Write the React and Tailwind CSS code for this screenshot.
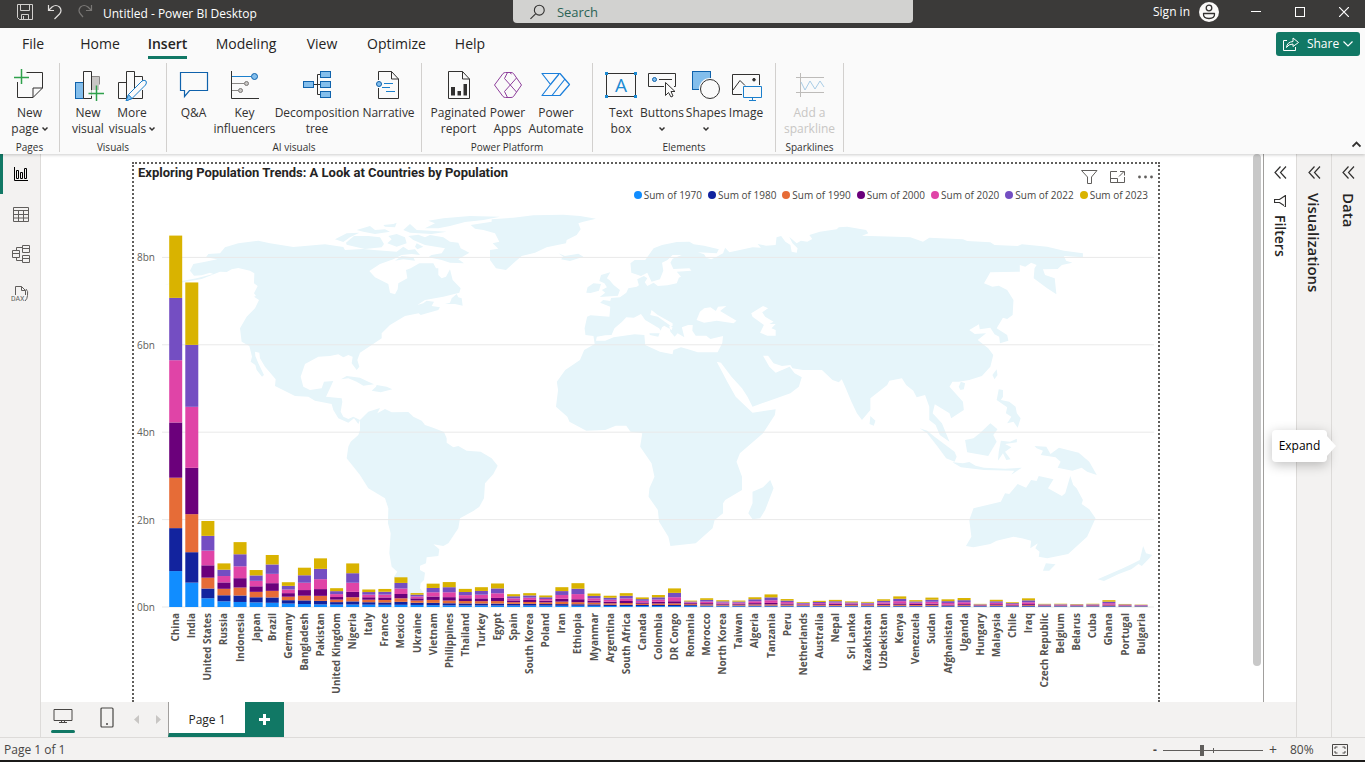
import React from "react";

const SERIES = [
  ["Sum of 1970", "#118DFF"],
  ["Sum of 1980", "#12239E"],
  ["Sum of 1990", "#E66C37"],
  ["Sum of 2000", "#6B007B"],
  ["Sum of 2020", "#E044A7"],
  ["Sum of 2022", "#744EC2"],
  ["Sum of 2023", "#D9B300"],
];

// Population in millions for each year of SERIES.
const DATA = [
  ["China", 822.5, 982.4, 1153.7, 1264.1, 1424.9, 1425.9, 1425.7],
  ["India", 557.5, 696.8, 870.5, 1059.6, 1396.4, 1417.2, 1428.6],
  ["United States", 200.3, 223.1, 248.1, 282.4, 335.9, 338.3, 340],
  ["Russia", 130.1, 138.3, 148, 146.8, 145.6, 144.7, 144.4],
  ["Indonesia", 115.2, 148.2, 182.2, 214.1, 271.9, 275.5, 277.5],
  ["Japan", 105.4, 117.6, 123.7, 126.8, 125.2, 124, 123.3],
  ["Brazil", 96.4, 122.3, 150.7, 175.9, 213.2, 215.3, 216.4],
  ["Germany", 78.3, 77.8, 79.4, 81.6, 83.3, 83.4, 83.3],
  ["Bangladesh", 67.5, 83.9, 107.1, 129.2, 167.4, 171.2, 173],
  ["Pakistan", 59.3, 80.6, 115.4, 154.4, 227.2, 235.8, 240.5],
  ["United Kingdom", 55.7, 56.3, 57.2, 58.9, 67.1, 67.5, 67.7],
  ["Nigeria", 55.6, 73, 95.2, 122.9, 208.3, 218.5, 223.8],
  ["Italy", 53.3, 56.3, 56.8, 57, 59.5, 59, 58.9],
  ["France", 50.5, 53.7, 56.4, 58.7, 64.5, 64.6, 64.8],
  ["Mexico", 50.3, 67.7, 81.7, 97.9, 126, 127.5, 128.5],
  ["Ukraine", 47.3, 49.9, 51.6, 48.9, 43.9, 39.7, 36.7],
  ["Vietnam", 41.9, 52.9, 66.9, 79, 96.6, 98.2, 98.9],
  ["Philippines", 37.4, 48.4, 61.6, 78, 112.2, 115.6, 117.3],
  ["Thailand", 35.8, 45.7, 55.2, 63.1, 71.5, 71.7, 71.8],
  ["Turkey", 35.5, 44.1, 54.3, 64.1, 84.1, 85.3, 85.8],
  ["Egypt", 34.8, 43.7, 57.2, 71.4, 107.5, 111, 112.7],
  ["Spain", 33.8, 37.5, 38.9, 40.7, 47.4, 47.6, 47.5],
  ["South Korea", 32.6, 38.2, 44.1, 46.8, 51.8, 51.8, 51.8],
  ["Poland", 32.5, 35.5, 38.1, 38.5, 38.4, 39.9, 41],
  ["Iran", 28.4, 38.5, 55.8, 65.5, 87.3, 88.6, 89.2],
  ["Ethiopia", 28.3, 34.9, 47.9, 67, 117.2, 123.4, 126.5],
  ["Myanmar", 27.3, 33.5, 40.1, 45.5, 53.4, 54.2, 54.6],
  ["Argentina", 23.8, 28, 32.6, 37, 45, 45.5, 45.8],
  ["South Africa", 22.4, 28.6, 39.9, 46.8, 58.8, 59.9, 60.4],
  ["Canada", 21.4, 24.5, 27.7, 30.7, 37.9, 38.5, 38.8],
  ["Colombia", 20.9, 26.2, 32.6, 39.2, 50.9, 51.9, 52.1],
  ["DR Congo", 20.2, 26.7, 35.9, 48.6, 92.9, 99, 102.3],
  ["Romania", 20.3, 22.6, 22.8, 21.9, 19.4, 19.7, 19.9],
  ["Morocco", 15.3, 19.7, 24.6, 28.6, 36.7, 37.5, 37.8],
  ["North Korea", 14.9, 17.6, 20.8, 23.4, 25.9, 26.1, 26.2],
  ["Taiwan", 14.9, 17.8, 20.6, 22.2, 23.8, 23.9, 23.9],
  ["Algeria", 13.8, 18.7, 25.5, 30.8, 43.5, 44.9, 45.6],
  ["Tanzania", 13.6, 19.3, 26.2, 34.5, 61.7, 65.5, 67.4],
  ["Peru", 13.6, 17.5, 22.1, 26.7, 33.3, 34, 34.4],
  ["Netherlands", 13, 14.1, 14.9, 15.9, 17.4, 17.6, 17.6],
  ["Australia", 12.6, 14.7, 17, 19, 25.7, 26.2, 26.4],
  ["Nepal", 12.5, 15.6, 19.6, 24.6, 29.3, 30.5, 30.9],
  ["Sri Lanka", 12.4, 14.9, 17.2, 18.8, 21.7, 21.8, 21.9],
  ["Kazakhstan", 12.3, 14.2, 16.9, 15.2, 19, 19.4, 19.6],
  ["Uzbekistan", 12, 15.9, 20.6, 24.9, 33.5, 34.6, 35.2],
  ["Kenya", 11.5, 16.2, 23.2, 30.9, 52, 54, 55.1],
  ["Venezuela", 11.4, 15.2, 19.8, 24.4, 28.5, 28.3, 28.8],
  ["Sudan", 11.3, 16.7, 21.1, 26.3, 44.4, 46.9, 48.1],
  ["Afghanistan", 10.8, 12.5, 10.7, 19.5, 39, 41.1, 42.2],
  ["Uganda", 10.3, 13.3, 17.6, 24, 44.4, 47.2, 48.6],
  ["Hungary", 10.3, 10.7, 10.4, 10.2, 9.8, 10, 10.2],
  ["Malaysia", 10.3, 13.2, 17.5, 22.9, 33.2, 33.9, 34.3],
  ["Chile", 9.8, 11.5, 13.3, 15.4, 19.3, 19.6, 19.6],
  ["Iraq", 9.8, 13.7, 17.7, 24.6, 42.6, 44.5, 45.5],
  ["Czech Republic", 9.8, 10.3, 10.3, 10.2, 10.5, 10.5, 10.5],
  ["Belgium", 9.6, 9.8, 10, 10.3, 11.6, 11.7, 11.7],
  ["Belarus", 9.2, 9.8, 10.4, 10.3, 9.6, 9.5, 9.5],
  ["Cuba", 8.9, 9.8, 10.6, 11.1, 11.3, 11.2, 11.2],
  ["Ghana", 8.9, 11.9, 15.4, 19.7, 32.2, 33.5, 34.1],
  ["Portugal", 8.7, 9.8, 10, 10.3, 10.3, 10.3, 10.2],
  ["Bulgaria", 8.6, 9, 8.8, 8.1, 7, 6.8, 6.7],
];

const WEST = [
  // North and Central America
  "M102 254L155 243L200 235L250 222L240 218L215 226L192 227L180 212L190 192L222 186L262 178L228 172L235 162L270 160L285 142L325 130L385 122L420 130L490 141L550 136L585 133L640 141L645 150L700 147L740 151L800 155L820 140L835 150L855 148L870 165L845 162L815 165L790 178L750 192L718 213L735 232L775 252L780 278L795 283L803 268L805 250L832 235L828 210L842 205L868 190L910 190L918 205L925 205L925 225L935 235L948 230L960 208L968 240L992 265L988 278L940 290L885 300L862 315L880 310L890 302L912 305L905 318L930 322L925 330L872 345L866 340L825 348L780 375L755 400L755 415L725 435L690 458L682 480L688 500L680 510L665 490L668 470L655 465L640 472L625 463L600 468L565 470L525 492L512 530L520 560L540 570L575 565L582 545L610 543L595 575L588 590L635 595L637 605L632 635L640 650L655 657L670 650L690 660L685 672L672 655L655 668L625 655L610 630L605 612L555 602L535 590L495 588L435 558L437 538L405 500L390 475L388 458L375 455L376 468L385 490L402 525L396 530L380 510L376 495L362 485L366 470L358 438L335 425L330 385L350 350L375 325L387 300L372 290L378 288L372 280L383 258L372 250L373 220L360 212L325 204L305 208L290 216L270 215L215 237L160 247Z",
  // South America
  "M690 660L715 635L750 624L742 640L765 627L785 637L835 636L850 650L875 662L885 675L905 682L942 696L950 715L950 728L970 742L985 738L1010 752L1052 755L1085 775L1103 797L1090 822L1065 850L1062 895L1048 920L1030 933L990 955L985 985L955 1030L940 1038L910 1033L928 1048L925 1068L890 1072L888 1090L870 1097L870 1110L885 1118L882 1140L872 1150L870 1165L882 1180L870 1195L885 1212L860 1205L820 1190L800 1160L792 1130L802 1115L785 1100L778 1060L782 1000L774 970L775 925L765 895L715 865L690 825L650 775L655 740L662 725L685 705L690 690Z",
  // Greenland and Iceland
  "M1022 75L1085 65L1085 58L1150 53L1210 46L1300 44L1350 48L1398 56L1360 65L1345 70L1352 88L1340 105L1310 120L1308 130L1250 142L1215 158L1175 168L1150 190L1128 210L1098 205L1080 180L1080 150L1105 146L1088 130L1108 125L1095 100L1060 90L1035 86Z",
  "M1285 160L1305 168L1345 161L1360 170L1320 183L1293 178L1300 170Z",
  // Arctic islands
  "M885 85L915 70L895 62L940 55L1020 48L1110 50L1060 60L1005 66L960 78L925 85Z",
  "M615 118L650 100L688 98L660 112L640 126Z",
  "M648 128L672 108L715 108L750 112L762 132L755 142L705 147L675 140L650 134Z",
  "M680 90L720 78L735 90L765 88L780 95L735 102L700 95Z",
  "M775 108L800 102L825 112L830 130L800 140L772 130L785 118Z",
  "M760 75L790 72L800 68L795 82L765 80Z",
  "M820 90L840 72L860 90L900 92L950 95L905 102L840 98Z",
  "M835 108L865 104L885 112L900 105L940 112L960 125L985 128L992 145L1018 158L985 178L1002 190L960 188L935 180L895 172L905 165L935 160L945 145L885 135L850 120Z",
  "M795 182L815 168L850 172L855 182L820 178Z",
  "M860 130L880 140L862 148L855 140Z",
  // Newfoundland and the Caribbean
  "M945 312L960 308L965 295L980 282L985 292L995 295L998 317L975 312Z",
  "M633 538L650 528L690 533L715 545L732 553L700 557L680 545L655 535Z",
  "M725 572L738 560L740 555L770 560L787 568L752 577Z",
];

const EAST = [
  // Europe, Asia and Africa
  "M207 350L215 346L260 350L262 320L238 308L245 300L262 303L264 294L285 292L300 278L305 265L325 260L330 256L326 238L342 228L350 235L344 247L350 258L365 248L375 258L398 256L420 250L425 233L430 230L420 215L455 212L450 205L412 207L405 188L410 176L432 165L410 165L398 180L385 188L388 212L380 238L360 245L350 218L335 228L312 218L310 190L320 180L345 180L365 145L385 135L420 126L450 125L460 133L485 137L520 148L515 160L470 157L485 163L490 173L502 178L515 170L530 160L535 143L545 157L570 150L600 142L620 143L612 132L632 137L655 135L657 112L668 108L678 125L690 135L693 155L705 158L707 145L695 130L687 110L705 130L715 122L730 125L742 117L735 105L760 95L800 88L805 82L825 80L870 90L875 100L860 107L940 110L975 112L1005 125L1020 113L1100 118L1110 123L1165 127L1175 135L1230 138L1240 133L1300 140L1340 152L1385 160L1385 172L1340 168L1345 182L1360 188L1335 195L1325 207L1290 208L1295 225L1318 235L1322 283L1300 265L1268 235L1270 205L1275 195L1262 188L1248 200L1235 195L1235 215L1165 217L1150 250L1170 260L1185 257L1205 270L1220 300L1218 345L1205 357L1195 353L1180 385L1205 405L1208 422L1188 430L1186 410L1175 403L1165 383L1140 388L1138 373L1115 390L1128 402L1155 400L1135 420L1160 445L1172 465L1165 500L1145 528L1115 540L1090 545L1075 545L1068 560L1100 605L1102 630L1072 655L1068 640L1033 613L1028 640L1050 670L1068 725L1045 705L1035 675L1020 660L1020 620L1010 585L990 592L982 572L965 555L955 535L925 542L920 555L880 595L880 630L860 660L848 640L835 605L820 560L812 538L805 547L790 540L765 510L720 510L695 505L690 495L670 498L650 490L637 467L625 467L640 500L655 518L688 500L700 520L717 532L710 560L690 580L640 602L600 620L588 590L575 565L550 530L525 488L515 485L540 545L560 590L600 638L655 628L653 645L625 700L570 760L562 785L575 830L575 870L535 900L530 910L530 940L510 960L505 985L465 1030L405 1038L400 1010L378 965L375 930L353 890L355 865L367 830L360 790L333 740L338 700L310 695L300 677L275 677L250 690L205 692L165 665L160 650L133 620L138 570L135 545L155 510L190 480L200 450L225 432L222 408L203 405L201 385Z",
  // British Isles
  "M262 217L240 225L236 243L248 250L254 262L242 270L250 278L237 291L280 287L285 270L270 255L260 240L254 235Z",
  "M205 278L208 262L222 250L240 252L235 272L215 279Z",
  // Madagascar, Sri Lanka, Taiwan, Hainan
  "M642 840L650 865L630 930L618 955L600 958L590 940L600 910L600 875L625 862Z",
  "M880 648L892 662L888 677L878 672Z",
  "M1180 508L1182 525L1175 538L1170 525Z",
  "M1090 560L1095 545L1105 550L1102 568L1094 570Z",
  // Philippines and Indonesia
  "M1185 568L1195 570L1195 590L1190 600L1210 605L1225 620L1228 640L1237 655L1230 683L1220 665L1205 670L1215 650L1202 640L1205 622L1180 600Z",
  "M997 685L1015 692L1030 708L1080 755L1085 770L1080 785L1060 775L1040 740L1015 700Z",
  "M1075 787L1100 790L1115 786L1130 797L1150 803L1200 806L1240 803L1215 824L1222 812L1150 810L1095 802Z",
  "M1105 720L1125 715L1140 700L1165 670L1182 688L1172 705L1180 725L1160 768L1110 757Z",
  "M1183 782L1185 755L1190 722L1212 725L1228 716L1228 727L1200 732L1215 742L1200 755L1213 778L1203 780L1195 760Z",
  // New Guinea, Australia, Tasmania, New Zealand
  "M1270 738L1298 740L1308 762L1328 743L1375 758L1400 785L1418 825L1395 815L1382 803L1360 812L1325 803L1332 785L1320 772L1285 765L1290 752L1275 745Z",
  "M1107 1038L1120 1010L1115 960L1125 925L1190 905L1200 880L1210 882L1230 852L1250 863L1262 840L1275 843L1280 828L1315 838L1302 865L1335 888L1343 880L1355 828L1362 855L1370 865L1385 900L1382 912L1400 928L1415 955L1395 1010L1350 1062L1300 1075L1280 1070L1282 1055L1272 1045L1278 1030L1260 1045L1262 1022L1240 1015L1220 1010L1180 1022L1165 1032L1125 1042Z",
  "M1290 1112L1297 1090L1320 1093L1305 1112Z",
  "M1528 1038L1535 1060L1550 1065L1525 1098L1517 1092L1500 1108L1470 1122L1435 1143L1420 1138L1480 1105L1505 1090L1520 1080Z",
];

const SEAS = [
  // Mediterranean, Black Sea, Caspian Sea
  "M228 422L230 410L250 406L265 405L272 385L290 365L300 352L318 353L335 342L345 360L378 385L382 392L380 400L355 400L356 405L376 410L385 382L390 377L408 390L410 382L375 350L357 345L360 330L375 345L410 370L410 378L402 377L405 395L415 410L422 400L438 412L432 382L447 375L458 375L457 392L465 407L490 407L500 417L530 408L528 430L517 457L470 457L445 447L430 442L412 450L410 463L380 455L345 435L343 405L320 403L270 412L250 422Z",
  "M467 360L475 335L485 325L500 322L513 333L518 320L538 318L523 333L562 362L555 370L515 362L485 368Z",
  "M597 340L625 318L637 325L623 337L630 350L650 365L640 372L655 372L645 385L655 390L655 407L635 407L618 398L627 375L600 350Z",
];

const baseY = 607;
const perMillion = 0.0437;

function PopulationChart() {
  return (
    <svg
      viewBox="134 206 1024 496"
      className="block h-auto w-full"
      role="img"
      aria-label="Population by country"
    >
      <g fill="#E6F5FA">
        <g transform="translate(130 200) scale(0.33333)">
          {WEST.map((d, i) => (
            <path key={i} d={d} />
          ))}
        </g>
        <g transform="translate(500 200) scale(0.42088 0.33333)">
          {EAST.map((d, i) => (
            <path key={i} d={d} />
          ))}
          <g fill="#fff">
            {SEAS.map((d, i) => (
              <path key={i} d={d} />
            ))}
          </g>
        </g>
      </g>
      {[0, 2, 4, 6, 8].map((bn) => {
        const y = baseY - bn * 1000 * perMillion;
        return (
          <g key={bn}>
            <line x1="162" x2="1154" y1={y} y2={y} stroke="#E9E9E9" />
            <text
              x="155"
              y={y + 4}
              textAnchor="end"
              fill="#605E5C"
              fontSize="10"
              className="font-['Open_Sans',sans-serif]"
            >
              {bn}bn
            </text>
          </g>
        );
      })}
      {DATA.map(([name, ...values], i) => {
        const x = 169.2 + i * 16.09;
        let y = baseY;
        return (
          <g key={name}>
            {values.map((v, k) => {
              const h = v * perMillion;
              y -= h;
              return (
                <rect key={k} x={x} y={y} width="13" height={h} fill={SERIES[k][1]} />
              );
            })}
            <text
              transform={`translate(${x + 10} 613) rotate(-90)`}
              textAnchor="end"
              fill="#55524F"
              fontSize="10"
              fontWeight="700"
              className="font-['Open_Sans',sans-serif]"
            >
              {name}
            </text>
          </g>
        );
      })}
    </svg>
  );
}

function Icon({ box, children }) {
  return (
    <svg viewBox={box} className="h-8 w-8 shrink-0" fill="none" stroke="#323130" aria-hidden="true">
      {children}
    </svg>
  );
}

const ICONS = {
  newPage: (
    <Icon box="13 69 32 32">
      <path d="M25.5 72.5H41.5V88L32 97.5H16.5V82M32 97.5V88H41.5" />
      <path d="M13 77.5H28M20.5 69V84" stroke="#2FA14B" strokeWidth="1.5" />
    </Icon>
  ),
  newVisual: (
    <Icon box="72 69 32 32">
      <rect x="75.5" y="82.5" width="8" height="16" fill="#83BEEC" stroke="#0F62AC" />
      <path d="M91.5 76.5H99.5V84.5M91.5 76.5V98" stroke="#8A8886" />
      <path d="M92 77H99V90H92Z" fill="#C8C6C4" stroke="none" />
      <path d="M91.5 90V71.5H83.5V98.5H91.5V96" fill="#FAFAFA" />
      <path d="M88.5 93.5H104M96.5 85.5V101" stroke="#2FA14B" strokeWidth="1.5" />
    </Icon>
  ),
  moreVisuals: (
    <Icon box="118 69 32 32">
      <path d="M128.5 82.5H120.5V98.5H128.5M128.5 98.5V71.5H136.5V90M136.5 76.5H144.5V82M144.5 90V98.5H134M128.5 98.5H130" />
      <path d="M128.5 100.5L130.5 94.5L144 81Q146 79.5 148 81Q149 83 147.5 85L134 98.5Z" fill="#FAFAFA" stroke="#1B7FCC" />
      <path d="M128 101L130.5 94.5L134 98.5Z" fill="#83BEEC" stroke="#1B7FCC" />
    </Icon>
  ),
  qa: (
    <Icon box="179 69 32 32">
      <path d="M181.5 72.5H208.5V90.5H190.5L185.5 96.5V90.5H181.5Z" stroke="#0F62AC" strokeWidth="1.2" />
    </Icon>
  ),
  key: (
    <Icon box="230 69 32 32">
      <path d="M232.5 71V98.5H260" />
      <path d="M233 76.5H252" stroke="#1B7FCC" />
      <path d="M233 83.5H245M233 90.5H239" stroke="#8A8886" />
      <circle cx="255.5" cy="76.5" r="3" fill="#83BEEC" stroke="#0F62AC" />
      <circle cx="247.5" cy="83.5" r="2" fill="#C8C6C4" stroke="#797775" />
      <circle cx="241.5" cy="90.5" r="2" fill="#C8C6C4" stroke="#797775" />
    </Icon>
  ),
  tree: (
    <Icon box="303 69 32 32">
      <path d="M316 84.5H322M322 74.5H319.5V94.5H322" />
      <g fill="#83BEEC" stroke="#0F62AC">
        <rect x="305.5" y="81.5" width="10" height="6" />
        <rect x="322.5" y="71.5" width="10" height="6" />
        <rect x="322.5" y="81.5" width="10" height="6" />
        <rect x="322.5" y="91.5" width="10" height="6" />
      </g>
    </Icon>
  ),
  narrative: (
    <Icon box="371 69 32 32">
      <path d="M376.5 80V71.5H389.5L396.5 79V98.5H376.5V88M389.5 71.5V79H396.5" />
      <path d="M382 83.5H391M380 87.5H388M384 91.5H393" stroke="#1B7FCC" />
      <circle cx="377" cy="84" r="2.5" fill="#83BEEC" stroke="#0F62AC" />
    </Icon>
  ),
  paginated: (
    <Icon box="443 69 32 32">
      <path d="M448.5 71.5H462.5L469.5 79V98.5H448.5ZM462.5 71.5V79H469.5" />
      <path d="M451 87H455V95.5H451ZM457.5 91H461V95.5H457.5ZM463.5 84H467V95.5H463.5Z" fill="#323130" stroke="none" />
    </Icon>
  ),
  apps: (
    <Icon box="491 69 32 32">
      <g stroke="#8E3F9C" strokeLinejoin="round">
        <path d="M493.5 85L502 73.5Q503 72.500 504.500 72.500H510Q511.500 72.500 512.500 73.500L520.500 85L512.500 96.500Q511.500 97.500 510 97.500H504.500Q503 97.500 502 96.500Z" />
        <path d="M506.5 72.5L503.5 78.500L515.5 92M506.5 97.500L503.5 91.500L515.5 78M508.500 72.500L510.500 74" />
      </g>
    </Icon>
  ),
  automate: (
    <Icon box="539 69 32 32">
      <g stroke="#1B7FDB" strokeWidth="1.2" strokeLinejoin="round">
        <path d="M541 73.5H559L568.5 84.5L559 95.5H541L549.5 84.5Z" />
        <path d="M558 74L549.5 84.5M564 79L551 95.5" />
      </g>
    </Icon>
  ),
  textBox: (
    <Icon box="605 69 32 32">
      <rect x="606.5" y="73.5" width="29" height="23" />
      <path d="M605 72h3v3h-3zM634 72h3v3h-3zM605 95h3v3h-3zM634 95h3v3h-3z" fill="#1B8AD3" stroke="none" />
      <text x="621" y="92" textAnchor="middle" fontSize="19" fill="#1B8AD3" stroke="none" className="font-['Open_Sans',sans-serif]">A</text>
    </Icon>
  ),
  buttons: (
    <Icon box="647 69 32 32">
      <path d="M665 86.5H649.5V73.5H676.5V86.5H675M660 79.5H673" />
      <circle cx="655.5" cy="79.5" r="2" fill="#83BEEC" stroke="#0F62AC" />
      <path d="M666.5 82.5V95.5L669.5 92.5L672 97L674 96L672 91.5H676Z" fill="#FAFAFA" />
    </Icon>
  ),
  shapes: (
    <Icon box="690 69 32 32">
      <rect x="692.5" y="71.5" width="18" height="18" fill="#83BEEC" stroke="#0F62AC" />
      <circle cx="710" cy="89" r="11" fill="#FAFAFA" stroke="none" />
      <circle cx="710" cy="89" r="9.5" fill="#FAFAFA" />
    </Icon>
  ),
  image: (
    <Icon box="731 69 32 32">
      <path d="M743 94.5H733.5V74.5H760.5V85M734 90L741 80.5L746 85.5" />
      <circle cx="755" cy="79.7" r="1.3" fill="#323130" />
      <path d="M744.5 86.5H762.5V97.5H744.5ZM753.5 97.5V100.5M750 100.5H757" stroke="#1B7FCC" />
    </Icon>
  ),
  sparkline: (
    <Icon box="794 69 32 32">
      <path d="M800.5 73V97M796 77.5H824M796 92.5H824" stroke="#BDBBB9" />
      <path d="M801 82L805 90L810 81L815 89L820 81L824 87" stroke="#A9CDE6" />
    </Icon>
  ),
};

function Caret() {
  return (
    <svg viewBox="0 0 6 5" className="inline-block h-1.5 w-1.5" fill="none" stroke="#323130" strokeWidth="1.5" aria-hidden="true">
      <path d="M0.5 1L3 3.5L5.5 1" />
    </svg>
  );
}

// [icon, first line, second line, width class, caret, disabled]
const GROUPS = [
  { title: "Pages", box: "w-[60px]", items: [["newPage", "New", "page", "w-[58px]", true]] },
  {
    title: "Visuals",
    box: "w-[107px]",
    items: [
      ["newVisual", "New", "visual", "w-[38px]"],
      ["moreVisuals", "More", "visuals", "w-[50px]", true],
    ],
  },
  {
    title: "AI visuals",
    box: "w-[255px]",
    items: [
      ["qa", "Q&A", "", "w-[44px]"],
      ["key", "Key", "influencers", "w-[58px]"],
      ["tree", "Decomposition", "tree", "w-[87px]"],
      ["narrative", "Narrative", "", "w-[56px]"],
    ],
  },
  {
    title: "Power Platform",
    box: "w-[171px]",
    items: [
      ["paginated", "Paginated", "report", "w-[58px]"],
      ["apps", "Power", "Apps", "w-[40px]"],
      ["automate", "Power", "Automate", "w-[57px]"],
    ],
  },
  {
    title: "Elements",
    box: "w-[183px]",
    items: [
      ["textBox", "Text", "box", "w-[36px]"],
      ["buttons", "Buttons", "", "w-[46px]", true],
      ["shapes", "Shapes", "", "w-[42px]", true],
      ["image", "Image", "", "w-[38px]"],
    ],
  },
  { title: "Sparklines", box: "w-[68px]", items: [["sparkline", "Add a", "sparkline", "w-[66px]", false, true]] },
];

function RibbonButton({ item }) {
  const [icon, first, second, width, caret, disabled] = item;
  return (
    <button
      type="button"
      disabled={disabled}
      className={`flex flex-col items-center text-xs leading-4 ${width} ${disabled ? "text-[#c8c6c4]" : "text-[#323130]"}`}
    >
      {ICONS[icon]}
      <span className="mt-1 whitespace-nowrap">{first}</span>
      <span className="flex h-4 items-center gap-[3px] whitespace-nowrap">
        {second}
        {caret && <Caret />}
      </span>
    </button>
  );
}

const TABS = [
  ["File", "w-[66px]"],
  ["Home", "w-[68px]"],
  ["Insert", "w-[67px]"],
  ["Modeling", "w-[90px]"],
  ["View", "w-[62px]"],
  ["Optimize", "w-[87px]"],
  ["Help", "w-[60px]"],
];

function TitleBar() {
  return (
    <header className="grid h-7 grid-cols-[minmax(0,513fr)_400px_minmax(0,452fr)] bg-[#3b3a39] text-white">
      <div className="flex items-center gap-[14px] pb-1 pl-[17px]">
        <button type="button" aria-label="Save">
          <svg viewBox="0 0 16 16" className="h-4 w-4" fill="none" stroke="#D2D0CE">
            <path d="M0.5 0.5H15.5V15.5H2.5L0.5 13.5ZM3.5 0.5V6.5H12.5V0.5M4.5 15.5V10.5H11.5V15.5M6.5 12V15" />
          </svg>
        </button>
        <button type="button" aria-label="Undo">
          <svg viewBox="0 0 16 16" className="h-4 w-4" fill="none" stroke="#E1DFDD" strokeWidth="1.2">
            <path d="M1.5 1V6.5H7M1.5 6.5L5 3Q9 0 12.500 3Q15.500 6.500 12.500 10L7.500 15" />
          </svg>
        </button>
        <button type="button" aria-label="Redo" disabled>
          <svg viewBox="0 0 16 16" className="h-4 w-4" fill="none" stroke="#797775" strokeWidth="1.2">
            <path d="M14.500 1V6.500H9M14.500 6.500L11 3Q7 0 3.500 3Q0.500 6.500 3.500 10L6 13" />
          </svg>
        </button>
        <span className="-ml-1 pt-1 text-xs leading-5 whitespace-nowrap">Untitled - Power BI Desktop</span>
      </div>
      <label className="mb-[5px] flex items-center gap-3 rounded-b-sm bg-[#d2d2d0] pl-[17px]">
        <svg viewBox="0 0 16 16" className="h-4 w-4" fill="none" stroke="#323130" strokeWidth="1.2" aria-hidden="true">
          <circle cx="10" cy="6" r="5.300" />
          <path d="M6 10L0.500 15.500" />
        </svg>
        <input
          type="text"
          aria-label="Search"
          placeholder="Search"
          className="w-full bg-transparent text-[13px] leading-5 outline-none placeholder:text-[#2b6355]"
        />
      </label>
      <div className="flex items-center justify-end pb-1">
        <button type="button" className="flex items-center gap-[9px] text-xs whitespace-nowrap">
          Sign in
          <svg viewBox="0 0 20 20" className="h-5 w-5" aria-hidden="true">
            <circle cx="10" cy="10" r="10" fill="#FAF9F8" />
            <circle cx="10" cy="6" r="2.800" fill="none" stroke="#323130" strokeWidth="1.300" />
            <path d="M4.500 11.500H15.500Q16 16.500 10 16.500Q4 16.500 4.500 11.500Z" fill="none" stroke="#323130" strokeWidth="1.300" strokeLinejoin="round" />
          </svg>
        </button>
        <div className="mr-4 ml-8 flex items-center gap-[34px]">
          <button type="button" aria-label="Minimize">
            <svg viewBox="0 0 10 10" className="h-2.5 w-2.5" stroke="#fff"><path d="M0 4.500H10" /></svg>
          </button>
          <button type="button" aria-label="Maximize">
            <svg viewBox="0 0 10 10" className="h-2.5 w-2.5" fill="none" stroke="#fff"><rect x="0.500" y="0.500" width="9" height="9" /></svg>
          </button>
          <button type="button" aria-label="Close">
            <svg viewBox="0 0 10 10" className="h-2.5 w-2.5" stroke="#fff" strokeWidth="1.200"><path d="M0 0L10 10M10 0L0 10" /></svg>
          </button>
        </div>
      </div>
    </header>
  );
}

function Ribbon() {
  return (
    <div className="relative z-10 bg-[#fafafa] shadow-[0_1px_3px_rgba(0,0,0,0.2)]">
      <div className="flex items-start justify-between">
        <nav className="flex" aria-label="Ribbon tabs">
          {TABS.map(([name, width]) => (
            <button
              key={name}
              type="button"
              className={`flex h-[31px] flex-col items-center text-sm text-[#252423] ${width}`}
            >
              <span className={`flex flex-col pt-1.5 leading-5 ${name === "Insert" ? "font-semibold" : ""}`}>
                {name}
                {name === "Insert" && <span className="mt-0.5 h-[3px] bg-[#117865]" />}
              </span>
            </button>
          ))}
        </nav>
        <button
          type="button"
          className="mt-1 mr-[5px] flex h-6 w-[84px] items-center justify-center gap-2 rounded-[3px] bg-[#117865] text-xs text-white"
        >
          <svg viewBox="0 0 16 14" className="h-3.5 w-4" fill="none" stroke="#fff" aria-hidden="true">
            <path d="M4 3.500H0.500V13.500H12.500V10M3.500 10.500Q4 5 10 4.500V1L15.500 5.500L10 9.500V7Q5.500 7 3.500 10.500Z" strokeLinejoin="round" />
          </svg>
          <span className="flex items-center gap-1">
            Share
            <svg viewBox="0 0 10 6" className="h-1.5 w-2.5" fill="none" stroke="#fff" strokeWidth="1.200" aria-hidden="true"><path d="M0.500 0.500L5 5L9.500 0.500" /></svg>
          </span>
        </button>
      </div>
      <div className="flex items-end justify-between">
        <div className="flex pt-1">
          {GROUPS.map((g) => (
            <section key={g.title} aria-label={g.title} className={`mb-0.5 flex flex-col items-center border-r border-[#d2d0ce] pt-1.5 ${g.box}`}>
              <div className="flex h-[71px] justify-center">
                {g.items.map((item) => (
                  <RibbonButton key={item[0]} item={item} />
                ))}
              </div>
              <div className="h-3 text-[10px] leading-3.5 whitespace-nowrap text-[#323130]">{g.title}</div>
            </section>
          ))}
        </div>
        <button type="button" aria-label="Collapse ribbon" className="mr-1 mb-1.5">
          <svg viewBox="0 0 9 7" className="h-[7px] w-[9px]" fill="none" stroke="#323130" strokeWidth="1.800"><path d="M0.500 5.500L4.500 1.500L8.500 5.500" /></svg>
        </button>
      </div>
    </div>
  );
}

function ViewRail() {
  return (
    <nav aria-label="Views" className="flex w-[41px] shrink-0 flex-col border-r border-[#dddbd9] bg-[#f3f2f1]">
      <button type="button" aria-label="Report view" className="flex h-10 items-center border-l-[3px] border-[#117865] pl-[11px]">
        <svg viewBox="0 0 14 14" className="h-3.5 w-3.5" fill="none" stroke="#000">
          <path d="M0.500 0V13.500H14M2.500 3.500H4.500V11.500H2.500ZM6.500 5.500H8.500V11.500H6.500ZM10.500 1.500H12.500V11.500H10.500Z" />
        </svg>
      </button>
      <button type="button" aria-label="Table view" className="flex h-10 items-center justify-center pl-0.5">
        <svg viewBox="0 0 16 15" className="h-[15px] w-4" fill="none" stroke="#605E5C">
          <path d="M0.500 0.500H15.500V14.500H0.500ZM0.500 3.500H15.500M0.500 7.500H15.500M0.500 11H15.500M5.500 3.500V14.500M10.500 3.500V14.500" />
        </svg>
      </button>
      <button type="button" aria-label="Model view" className="flex h-10 items-center justify-center pl-0.5">
        <svg viewBox="0 0 18 18" className="h-[18px] w-[18px]" fill="none" stroke="#605E5C">
          <path d="M0.500 5.500H7.500V12.500H0.500ZM0.500 8.500H7.500M10.500 0.500H17.500V7.500H10.500ZM10.500 3.500H17.500M10.500 10.500H17.500V17.500H10.500ZM10.500 13.500H17.500M4.500 5.500V2.500H10.500M4.500 12.500V15.500H10.500" />
        </svg>
      </button>
      <button type="button" aria-label="DAX query view" className="flex h-10 items-center justify-center">
        <svg viewBox="0 0 18 18" className="h-[18px] w-[18px]" fill="none" stroke="#605E5C">
          <path d="M4.500 10V1.500H10.500L14.500 5.500V10M10.500 1.500V5.500H14.500M15 4Q17.500 6 16.500 10.500Q16.300 14 14 16" />
          <text x="0" y="16" fontSize="7" fill="#605E5C" stroke="none" className="font-[Roboto,sans-serif]">DAX</text>
        </svg>
      </button>
    </nav>
  );
}

function Report() {
  return (
    <main className="flex h-[548px] grow basis-0 justify-between overflow-hidden bg-white">
      <section className="mt-2 mr-[93px] ml-[91px] min-w-0 grow border-2 border-b-0 border-dotted border-[#605e5c]">
        <div className="relative flex h-[42px] flex-col justify-between pr-2.5 pl-1">
          <h1 className="font-[Roboto,sans-serif] text-[13px] leading-[18px] font-bold text-[#252423]">
            Exploring Population Trends: A Look at Countries by Population
          </h1>
          <div className="absolute top-[5px] right-1 flex items-center gap-3 text-[#605e5c]">
            <button type="button" aria-label="Filters on visual">
              <svg viewBox="0 0 17 16" className="h-4 w-[17px]" fill="none" stroke="currentColor">
                <path d="M0.500 1.500H16L10.500 8V14.500H6.500V8Z" />
              </svg>
            </button>
            <button type="button" aria-label="Focus mode">
              <svg viewBox="0 0 15 14" className="h-3.5 w-[15px]" fill="none" stroke="currentColor">
                <path d="M7 1.500H0.500V12.500H14.500V7M0.500 8.500H7.500V12.500M9 6.500L14 1.500M10 1.500H14.500V5.500" />
              </svg>
            </button>
            <button type="button" aria-label="More options">
              <svg viewBox="0 0 17 4" className="h-1 w-[17px]" fill="currentColor">
                <circle cx="2.500" cy="2" r="1.400" /><circle cx="8.500" cy="2" r="1.400" /><circle cx="14.500" cy="2" r="1.400" />
              </svg>
            </button>
          </div>
          <ul className="mb-[3px] flex justify-end gap-1.5 text-[10px] leading-4 text-[#484644]">
            {SERIES.map(([name, color]) => (
              <li key={name} className="flex items-center gap-0.5 whitespace-nowrap">
                <span className="h-2 w-2 rounded-full" style={{ backgroundColor: color }} />
                {name}
              </li>
            ))}
          </ul>
        </div>
        <PopulationChart />
      </section>
      <div className="mr-0.5 h-[512px] w-2 shrink-0 rounded-full bg-[#c8c8c8]" />
    </main>
  );
}

function Chevrons() {
  return (
    <svg viewBox="0 0 13 13" className="h-[13px] w-[13px]" fill="none" stroke="#323130" strokeWidth="1.200" aria-hidden="true">
      <path d="M6.500 0.500L1 6.500L6.500 12.500M12 0.500L6.500 6.500L12 12.500" />
    </svg>
  );
}

function PageTabs() {
  return (
    <div className="flex h-[35px] bg-[#f3f2f1]">
      <div className="flex w-[127px] items-start">
        <button type="button" aria-label="Desktop layout" className="ml-2.5 flex h-[31px] w-6 flex-col items-center justify-between pt-[7px]">
          <svg viewBox="0 0 20 15" className="h-[15px] w-5" fill="none" stroke="#484644">
            <path d="M1 0.500H19V11.500H1ZM8.500 11.500V13.500M11.500 11.500V13.500M6 13.500H14" />
          </svg>
          <span className="h-[3px] w-6 rounded-full bg-[#117865]" />
        </button>
        <button type="button" aria-label="Mobile layout" className="ml-[25px] pt-[5px]">
          <svg viewBox="0 0 14 21" className="h-[21px] w-3.5" fill="none" stroke="#484644" strokeWidth="1.200">
            <rect x="1" y="1" width="12" height="19" rx="1" />
            <path d="M6 17H8" strokeWidth="1.500" />
          </svg>
        </button>
        <button type="button" aria-label="Previous page" className="ml-5 pt-[13px]">
          <svg viewBox="0 0 5 9" className="h-[9px] w-[5px]" fill="#C8C6C4"><path d="M5 0V9L0 4.500Z" /></svg>
        </button>
        <button type="button" aria-label="Next page" className="ml-[17px] pt-[13px]">
          <svg viewBox="0 0 5 9" className="h-[9px] w-[5px]" fill="#C8C6C4"><path d="M0 0V9L5 4.500Z" /></svg>
        </button>
      </div>
      <button type="button" className="w-[77px] border-b-4 border-l border-b-[#117865] border-l-[#a19f9d] bg-white pt-1 text-xs text-[#252423]">
        Page 1
      </button>
      <button type="button" aria-label="New page" className="flex w-[39px] items-center justify-center bg-[#117865]">
        <svg viewBox="0 0 11 11" className="h-[11px] w-[11px]" stroke="#fff" strokeWidth="3"><path d="M5.500 0V11M0 5.500H11" /></svg>
      </button>
    </div>
  );
}

function Panes() {
  return (
    <div className="relative flex shrink-0">
      <aside aria-label="Visualizations" className="flex w-[35px] flex-col items-center border-l border-[#dddbd9] bg-[#f3f2f1] pt-3">
        <button type="button" aria-label="Expand Visualizations"><Chevrons /></button>
        <h2 className="mt-3.5 text-[15px] leading-5 font-semibold text-[#252423] [writing-mode:vertical-rl]">Visualizations</h2>
      </aside>
      <aside aria-label="Data" className="flex w-[34px] flex-col items-center border-l border-[#dddbd9] bg-[#f3f2f1] pt-3">
        <button type="button" aria-label="Expand Data"><Chevrons /></button>
        <h2 className="mt-3.5 text-[15px] leading-5 font-semibold text-[#252423] [writing-mode:vertical-rl]">Data</h2>
      </aside>
      <div role="tooltip" className="absolute top-[276px] right-[38px] z-20 flex h-8 w-[55px] items-center justify-center rounded-sm bg-white text-xs text-black shadow-[0_3px_12px_rgba(0,0,0,0.25)]">
        Expand
        <svg viewBox="0 0 9 20" className="absolute top-1.5 left-full h-5 w-[9px]" fill="#fff" aria-hidden="true"><path d="M0 0L9 10L0 20Z" /></svg>
      </div>
    </div>
  );
}

function StatusBar() {
  return (
    <footer className="flex h-[25px] items-center justify-between border-t border-b-2 border-t-[#dddbd9] border-b-[#1b1a19] bg-[#f3f2f1] pt-0.5 pr-[17px] pl-1 text-xs text-[#484644]">
      <span>Page 1 of 1</span>
      <div className="flex items-center">
        <button type="button" aria-label="Zoom out" className="w-2.5 text-left font-bold">-</button>
        <div className="relative flex w-[100px] items-center">
          <input
            type="range"
            aria-label="Zoom"
            min="10"
            max="190"
            defaultValue="80"
            className="h-px w-full appearance-none bg-[#605e5c] [&::-webkit-slider-thumb]:h-[11px] [&::-webkit-slider-thumb]:w-1 [&::-webkit-slider-thumb]:appearance-none [&::-webkit-slider-thumb]:bg-[#605e5c]"
          />
          <span className="pointer-events-none absolute left-1/2 h-[5px] w-px bg-[#605e5c]" />
        </div>
        <button type="button" aria-label="Zoom in" className="ml-1.5 w-[21px] text-left text-sm leading-4">+</button>
        <button type="button" className="w-[42px] text-left">80%</button>
        <button type="button" aria-label="Fit to page">
          <svg viewBox="0 0 16 12" className="h-3 w-4" fill="none" stroke="#484644">
            <path d="M0.500 0.500H15.500V11.500H0.500ZM3 5V3H5.500M10.500 3H13V5M13 7V9H10.500M5.500 9H3V7" />
          </svg>
        </button>
      </div>
    </footer>
  );
}

export default function App() {
  return (
    <div className="flex min-h-screen flex-col bg-[#f3f2f1] font-['Open_Sans',sans-serif]">
      <TitleBar />
      <Ribbon />
      <div className="flex grow">
        <ViewRail />
        <div className="flex min-w-0 grow flex-col">
          <div className="flex grow">
            <Report />
            <aside aria-label="Filters" className="flex w-[33px] shrink-0 flex-col items-center border-l border-[#a19f9d] bg-white pt-3">
              <button type="button" aria-label="Expand Filters"><Chevrons /></button>
              <svg viewBox="0 0 12 12" className="mt-4 h-3 w-3 shrink-0" fill="none" stroke="#323130" strokeWidth="1.200" aria-hidden="true">
                <path d="M11.500 0.500V11.500L5.500 7.500H0.500V4.500H5.500Z" />
              </svg>
              <h2 className="mt-2 text-sm leading-5 font-semibold text-[#252423] [writing-mode:vertical-rl]">Filters</h2>
            </aside>
          </div>
          <PageTabs />
        </div>
        <Panes />
      </div>
      <StatusBar />
    </div>
  );
}
